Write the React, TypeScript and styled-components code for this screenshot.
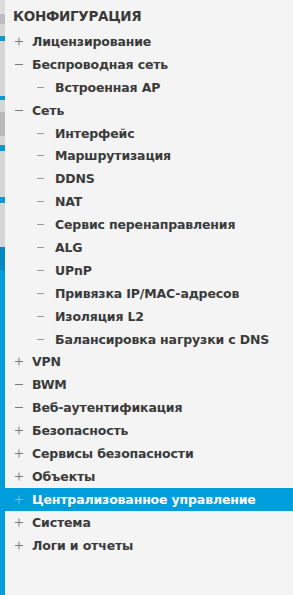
import React from 'react';
import styled, { createGlobalStyle } from 'styled-components';

type Item = {
  label: string;
  level: 1 | 2;
  icon: 'plus' | 'minus';
  active?: boolean;
};

const items: Item[] = [
  { label: 'Лицензирование', level: 1, icon: 'plus' },
  { label: 'Беспроводная сеть', level: 1, icon: 'minus' },
  { label: 'Встроенная AP', level: 2, icon: 'minus' },
  { label: 'Сеть', level: 1, icon: 'minus' },
  { label: 'Интерфейс', level: 2, icon: 'minus' },
  { label: 'Маршрутизация', level: 2, icon: 'minus' },
  { label: 'DDNS', level: 2, icon: 'minus' },
  { label: 'NAT', level: 2, icon: 'minus' },
  { label: 'Сервис перенаправления', level: 2, icon: 'minus' },
  { label: 'ALG', level: 2, icon: 'minus' },
  { label: 'UPnP', level: 2, icon: 'minus' },
  { label: 'Привязка IP/MAC-адресов', level: 2, icon: 'minus' },
  { label: 'Изоляция L2', level: 2, icon: 'minus' },
  { label: 'Балансировка нагрузки с DNS', level: 2, icon: 'minus' },
  { label: 'VPN', level: 1, icon: 'plus' },
  { label: 'BWM', level: 1, icon: 'minus' },
  { label: 'Веб-аутентификация', level: 1, icon: 'minus' },
  { label: 'Безопасность', level: 1, icon: 'plus' },
  { label: 'Сервисы безопасности', level: 1, icon: 'plus' },
  { label: 'Объекты', level: 1, icon: 'plus' },
  { label: 'Централизованное управление', level: 1, icon: 'plus', active: true },
  { label: 'Система', level: 1, icon: 'plus' },
  { label: 'Логи и отчеты', level: 1, icon: 'plus' },
];

const GlobalStyle = createGlobalStyle`
  html, body {
    margin: 0;
    padding: 0;
    background: #f4f4f4;
  }
`;

const Page = styled.div`
  display: flex;
  width: 293px;
  height: 595px;
  overflow: hidden;
  font-family: 'DejaVu Sans', 'Liberation Sans', sans-serif;
`;

const Strip = styled.div`
  width: 5px;
  flex: none;
  background: linear-gradient(
    to bottom,
    #dcdcdc 0px,
    #dcdcdc 14px,
    #bdbdbd 14px,
    #bdbdbd 24px,
    #d6d6d6 24px,
    #d6d6d6 36px,
    #0d97d3 36px,
    #0d97d3 41px,
    #d6d6d6 41px,
    #d6d6d6 96px,
    #0d97d3 96px,
    #0d97d3 100px,
    #d6d6d6 100px,
    #d6d6d6 112px,
    #b9b9b9 112px,
    #b9b9b9 136px,
    #d6d6d6 136px,
    #d6d6d6 145px,
    #0d97d3 145px,
    #0d97d3 151px,
    #d6d6d6 151px,
    #d6d6d6 197px,
    #0d97d3 197px,
    #0d97d3 203px,
    #d6d6d6 203px,
    #d6d6d6 247px,
    #0688c0 247px,
    #0688c0 270px,
    #009ddc 270px,
    #009ddc 100%
  );
`;

const Panel = styled.nav`
  flex: 1;
  background: #f4f4f4;
  display: flex;
  flex-direction: column;
  padding-top: 4px;
`;

const Title = styled.div`
  height: 23px;
  margin-bottom: 3px;
  display: flex;
  align-items: center;
  padding-left: 8px;
  font-size: 13.5px;
  font-weight: bold;
  color: #3a3a3a;
  letter-spacing: -0.3px;
`;

const Row = styled.div<{ $level: number; $active?: boolean }>`
  height: 22.9px;
  display: flex;
  align-items: center;
  margin-left: ${(p) => (p.$active ? '-5px' : '0')};
  padding-left: ${(p) => (p.$level === 2 ? 32 : 10) + (p.$active ? 5 : 0)}px;
  background: ${(p) => (p.$active ? '#009ddc' : 'transparent')};
  color: ${(p) => (p.$active ? '#ffffff' : '#3a3a3a')};
  font-size: 12.5px;
  font-weight: bold;
  white-space: nowrap;
`;

const IconBox = styled.span<{ $level: number }>`
  width: ${(p) => (p.$level === 2 ? 18 : 17)}px;
  height: 22px;
  display: flex;
  align-items: center;
  flex: none;
`;

const Label = styled.span`
  letter-spacing: -0.15px;
`;

const TreeIcon = ({ kind, level, active }: { kind: 'plus' | 'minus'; level: number; active?: boolean }) => {
  const color = active ? '#6fc3ea' : level === 2 ? '#9a9a9a' : '#7a7a7a';
  const w = level === 2 ? 7 : 8;
  return (
    <svg width={w + 1} height="9" viewBox={`0 0 ${w + 1} 9`}>
      <rect x="0" y="4" width={w} height="1" fill={color} />
      {kind === 'plus' && <rect x={w / 2 - 0.5} y="0.5" width="1" height="8" fill={color} />}
    </svg>
  );
};

export default function App() {
  return (
    <Page>
      <GlobalStyle />
      <Strip />
      <Panel>
        <Title>КОНФИГУРАЦИЯ</Title>
        {items.map((item) => (
          <Row key={item.label} $level={item.level} $active={item.active}>
            <IconBox $level={item.level}>
              <TreeIcon kind={item.icon} level={item.level} active={item.active} />
            </IconBox>
            <Label>{item.label}</Label>
          </Row>
        ))}
      </Panel>
    </Page>
  );
}
